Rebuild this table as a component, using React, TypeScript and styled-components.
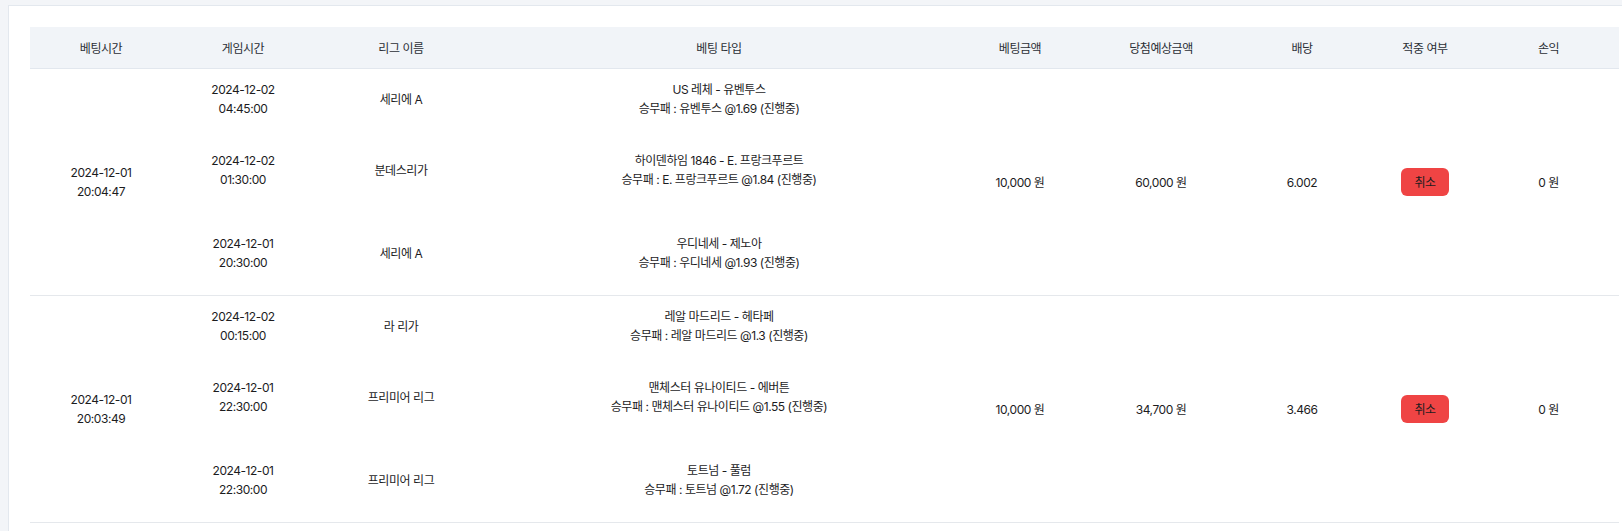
import * as React from 'react'
import styled, { createGlobalStyle } from 'styled-components'

const GlobalStyle = createGlobalStyle`
  body {
    margin: 0;
    background: #f3f5f8;
    font-family: Inter, "Noto Sans CJK KR", sans-serif;
    color: #1c1c1e;
    letter-spacing: -0.45px;
  }
`

const columns = '142px 142px 174px 462px 140px 142px 140px 106px 141px'

const Page = styled.div`
  padding: 5px 0 0 8px;
  min-height: 526px;
`

const Card = styled.div`
  background: #fff;
  border-top: 1px solid #e3e8ee;
  border-left: 1px solid #e3e8ee;
  padding: 21px 3px 8px 21px;
  min-height: 497px;
`

const HeaderRow = styled.div`
  display: grid;
  grid-template-columns: ${columns};
  height: 41px;
  background: #f1f4f8;
  border-bottom: 1px solid #e2e7ee;
`

const HeadCell = styled.div`
  display: flex;
  align-items: center;
  justify-content: center;
  font-size: 12px;
  color: #2b2f36;
`

const Group = styled.div`
  display: grid;
  grid-template-columns: ${columns};
  grid-template-rows: 60px 82px 84px;
  border-bottom: 1px solid #e5e8ec;
`

const Cell = styled.div<{ $span?: boolean; $col?: number }>`
  display: flex;
  flex-direction: column;
  align-items: center;
  justify-content: center;
  text-align: center;
  font-size: 12px;
  line-height: 19px;
  grid-row: ${(p) => (p.$span ? '1 / -1' : 'auto')};
  ${(p) => (p.$col ? `grid-column: ${p.$col};` : '')}
`

const CancelBadge = styled.span`
  display: inline-flex;
  align-items: center;
  justify-content: center;
  width: 48px;
  height: 28px;
  border-radius: 6px;
  background: #ef4444;
  color: #1c1c1e;
  font-size: 12px;
`

type Game = {
  date: string
  time: string
  league: string
  match: string
  pick: string
}

type Bet = {
  date: string
  time: string
  games: Game[]
  amount: string
  expected: string
  odds: string
  profit: string
}

const bets: Bet[] = [
  {
    date: '2024-12-01',
    time: '20:04:47',
    amount: '10,000 원',
    expected: '60,000 원',
    odds: '6.002',
    profit: '0 원',
    games: [
      {
        date: '2024-12-02',
        time: '04:45:00',
        league: '세리에 A',
        match: 'US 레체 - 유벤투스',
        pick: '승무패 : 유벤투스 @1.69 (진행중)',
      },
      {
        date: '2024-12-02',
        time: '01:30:00',
        league: '분데스리가',
        match: '하이덴하임 1846 - E. 프랑크푸르트',
        pick: '승무패 : E. 프랑크푸르트 @1.84 (진행중)',
      },
      {
        date: '2024-12-01',
        time: '20:30:00',
        league: '세리에 A',
        match: '우디네세 - 제노아',
        pick: '승무패 : 우디네세 @1.93 (진행중)',
      },
    ],
  },
  {
    date: '2024-12-01',
    time: '20:03:49',
    amount: '10,000 원',
    expected: '34,700 원',
    odds: '3.466',
    profit: '0 원',
    games: [
      {
        date: '2024-12-02',
        time: '00:15:00',
        league: '라 리가',
        match: '레알 마드리드 - 헤타페',
        pick: '승무패 : 레알 마드리드 @1.3 (진행중)',
      },
      {
        date: '2024-12-01',
        time: '22:30:00',
        league: '프리미어 리그',
        match: '맨체스터 유나이티드 - 에버튼',
        pick: '승무패 : 맨체스터 유나이티드 @1.55 (진행중)',
      },
      {
        date: '2024-12-01',
        time: '22:30:00',
        league: '프리미어 리그',
        match: '토트넘 - 풀럼',
        pick: '승무패 : 토트넘 @1.72 (진행중)',
      },
    ],
  },
]

const headers = [
  '베팅시간',
  '게임시간',
  '리그 이름',
  '베팅 타입',
  '베팅금액',
  '당첨예상금액',
  '배당',
  '적중 여부',
  '손익',
]

export default () => (
  <Page>
    <GlobalStyle />
    <Card>
      <HeaderRow>
        {headers.map((h) => (
          <HeadCell key={h}>{h}</HeadCell>
        ))}
      </HeaderRow>
      {bets.map((bet, i) => (
        <Group key={i}>
          <Cell $span $col={1}>
            <span>{bet.date}</span>
            <span>{bet.time}</span>
          </Cell>
          {bet.games.map((g, j) => (
            <React.Fragment key={j}>
              <Cell $col={2}>
                <span>{g.date}</span>
                <span>{g.time}</span>
              </Cell>
              <Cell $col={3}>{g.league}</Cell>
              <Cell $col={4}>
                <span>{g.match}</span>
                <span>{g.pick}</span>
              </Cell>
            </React.Fragment>
          ))}
          <Cell $span $col={5}>{bet.amount}</Cell>
          <Cell $span $col={6}>{bet.expected}</Cell>
          <Cell $span $col={7}>{bet.odds}</Cell>
          <Cell $span $col={8}>
            <CancelBadge>취소</CancelBadge>
          </Cell>
          <Cell $span $col={9}>{bet.profit}</Cell>
        </Group>
      ))}
    </Card>
  </Page>
)
